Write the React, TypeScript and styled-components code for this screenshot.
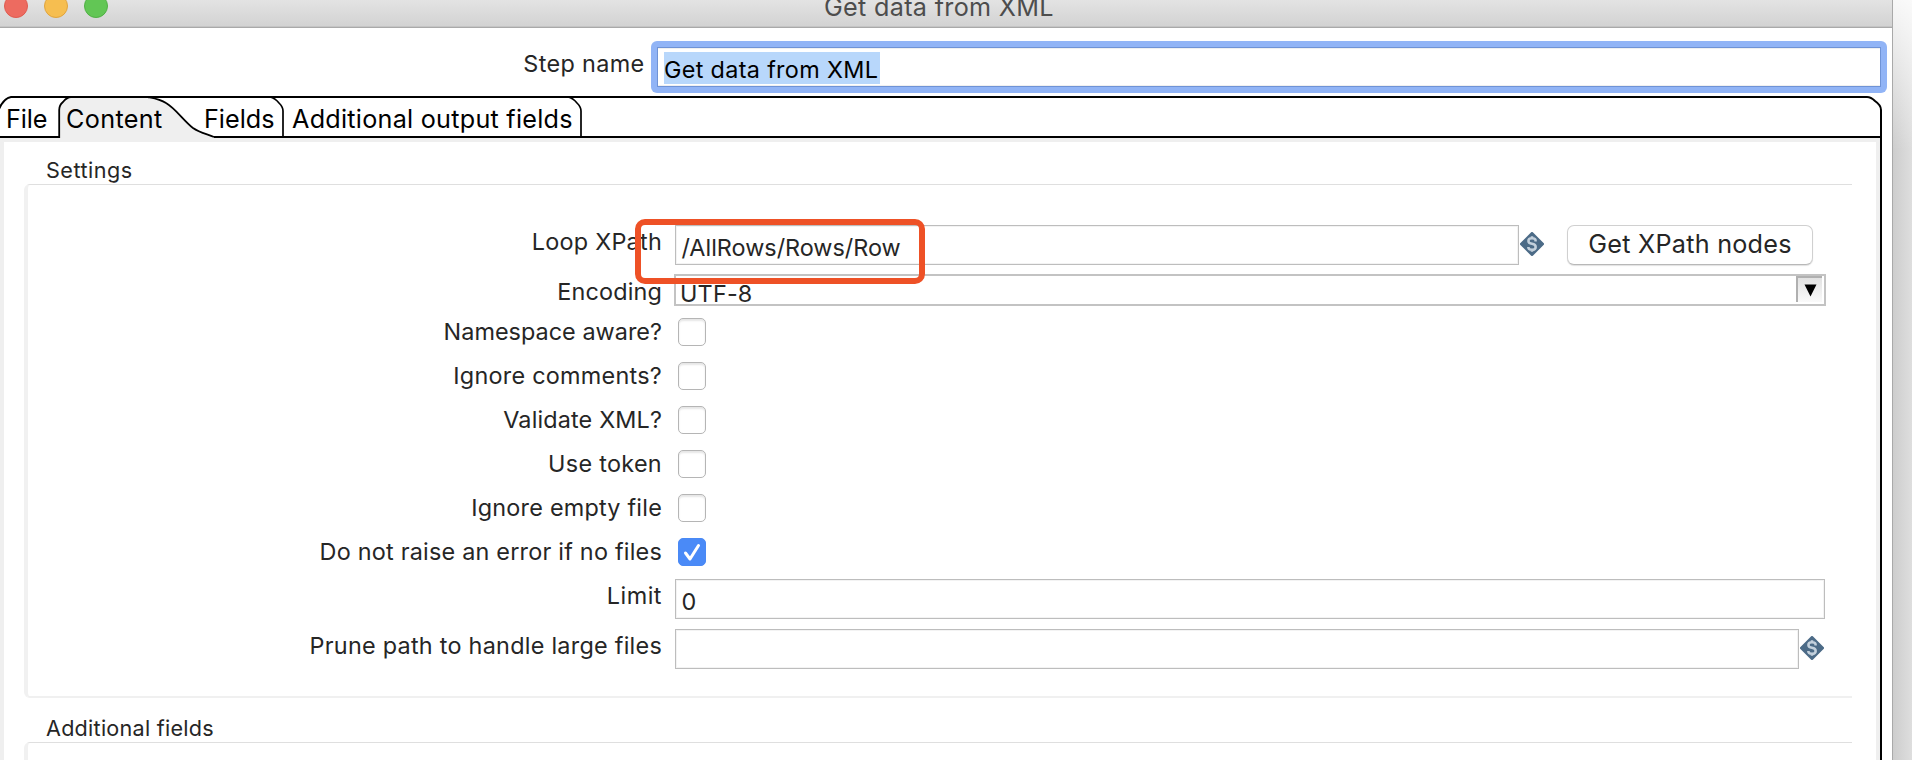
import React from 'react';
import styled, { createGlobalStyle } from 'styled-components';

const GlobalStyle = createGlobalStyle`
  * { box-sizing: border-box; }
  body {
    margin: 0;
    background: #fff;
    color: #262626;
    font-family: Inter, "Liberation Sans", sans-serif;
    font-size: 23.4px;
  }
`;

const Desktop = styled.div`
  display: flex;
  width: 1912px;
  height: 760px;
  overflow: hidden;
`;

const Dialog = styled.main`
  display: flex;
  flex-direction: column;
  width: 1892px;
  height: 760px;
  overflow: hidden;
  background: #fff;
`;

const DesktopShade = styled.div`
  flex: 1;
  border-left: 1px solid #a9a9a9;
  background:
    linear-gradient(to bottom, rgba(255, 255, 255, 0.85) 0, rgba(255, 255, 255, 0) 150px),
    linear-gradient(to right, #cdcdcd, #dedede);
`;

const TitleBar = styled.header`
  position: relative;
  flex: none;
  height: 28px;
  border-bottom: 1px solid #a9a9a9;
  box-shadow: inset 0 -1px 0 #c4c4c4;
  background: linear-gradient(to bottom, #e3e3e3, #d2d2d2);
  overflow: hidden;
`;

const TrafficLights = styled.div`
  display: flex;
  gap: 16px;
  margin: -6px 0 0 4px;
`;

const Light = styled.span<{ $fill: string; $rim: string }>`
  width: 24px;
  height: 24px;
  border: 1px solid ${p => p.$rim};
  border-radius: 50%;
  background: ${p => p.$fill};
`;

const WindowTitle = styled.div`
  position: absolute;
  left: 824px;
  top: -8px;
  font-size: 25.2px;
  line-height: 30px;
  letter-spacing: 0.3px;
  white-space: nowrap;
  color: #4d4d4d;
`;

const StepRow = styled.div`
  display: grid;
  grid-template-columns: 644.5px 1236px;
  column-gap: 6.5px;
  flex: none;
  height: 68px;
  padding-top: 13px;
`;

const Caption = styled.label<{ $down?: number; $spacing?: number }>`
  justify-self: end;
  margin-top: ${p => p.$down ?? 0}px;
  height: 28px;
  line-height: 28px;
  letter-spacing: ${p => p.$spacing ?? 0.27}px;
  white-space: nowrap;
`;

const FocusedField = styled.div`
  display: flex;
  height: 52px;
  padding: 6px;
  border-radius: 6px;
  background: #91b4f6;
`;

const FocusedInner = styled.div`
  flex: 1;
  padding: 4px 0 0 6px;
  border: 1px solid #6f93d6;
  background: #fff;
  box-shadow: inset 0 1px 0 #f0f0f0, inset 0 -1px 0 #f0f0f0;
  color: #000;
`;

const Selection = styled.span`
  display: block;
  width: 216px;
  height: 32px;
  line-height: 35px;
  letter-spacing: 0.32px;
  white-space: nowrap;
  background: #b8d7fb;
`;

const TabStrip = styled.nav`
  position: relative;
  display: flex;
  flex: none;
  height: 42px;
`;

const TabOutline = styled.svg`
  position: absolute;
  inset: 0;
`;

const Tab = styled.span<{ $width: number; $pad: number; $spacing: number }>`
  position: relative;
  flex: none;
  width: ${p => p.$width}px;
  padding-left: ${p => p.$pad}px;
  font-size: 25.2px;
  line-height: 46px;
  letter-spacing: ${p => p.$spacing}px;
  white-space: nowrap;
  color: #000;
`;

const TabPanel = styled.section`
  flex: 1;
  padding: 15px 23px 0 20px;
  border-style: solid;
  border-color: #efefef;
  border-width: 4px 4px 0;
  background: #fff;
`;

const PanelFrame = styled.div`
  display: flex;
  flex: 1;
  width: 1882px;
  border-right: 2px solid #000;
`;

const GroupTitle = styled.h2<{ $spacing: number }>`
  margin: 0 0 0 22px;
  height: 27px;
  font-size: 21.6px;
  font-weight: 400;
  line-height: 26px;
  letter-spacing: ${p => p.$spacing}px;
`;

const GroupBox = styled.div<{ $height: number }>`
  display: flex;
  flex-direction: column;
  width: 1828px;
  height: ${p => p.$height}px;
  margin-bottom: 17px;
  padding-top: 40px;
  border-top: 1px solid #dfdfdf;
  border-left: 4px solid #f1f1f1;
  border-bottom: 2px solid #f0f0f0;
  border-radius: 6px 0 0 6px;
`;

const FormRow = styled.div<{ $height: number; $gap?: number; $indent?: number }>`
  display: grid;
  grid-template-columns: 634px 1fr;
  column-gap: ${p => p.$indent ?? 13}px;
  height: ${p => p.$height}px;
  margin-bottom: ${p => p.$gap ?? 0}px;
`;

const Controls = styled.div`
  display: flex;
`;

const TextField = styled.div<{ $width: number; $spacing?: number }>`
  width: ${p => p.$width}px;
  height: 40px;
  padding-left: 5.5px;
  border: 1px solid #bdbdbd;
  box-shadow: inset 0 0 0 1px #f3f3f3;
  line-height: 44px;
  letter-spacing: ${p => p.$spacing ?? 0}px;
`;

const VariableMark = styled.svg`
  flex: none;
  margin: 7px 0 0 1px;
`;

const PushButton = styled.button`
  width: 246px;
  height: 40px;
  margin-left: 23px;
  padding: 0 0 2px;
  border: 1px solid #d0d0d0;
  border-bottom-color: #b8b8b8;
  border-radius: 7px;
  background: #fff;
  box-shadow: 0 1px 1px rgba(0, 0, 0, 0.12);
  color: #262626;
  font: 25.2px Inter, "Liberation Sans", sans-serif;
  letter-spacing: 0.25px;
`;

const Combo = styled.div`
  display: flex;
  justify-content: space-between;
  width: 1152px;
  height: 32px;
  padding: 0 2px 2px 4px;
  border: 2px solid #c3c3c3;
  line-height: 36px;
  letter-spacing: 0.2px;
`;

const DropButton = styled.span`
  display: flex;
  justify-content: center;
  width: 26px;
  height: 26px;
  padding-top: 6px;
  border-top: 2px solid #b0b0b0;
  border-left: 2px solid #b0b0b0;
  background: linear-gradient(to bottom, #e2e2e2, #fafafa);
`;

const Check = styled.span<{ $on?: boolean }>`
  width: 28px;
  height: 28px;
  border: 1px solid ${p => (p.$on ? '#4a89f5' : '#b5b5b5')};
  border-radius: 5px;
  background: ${p => (p.$on ? '#4a8af7' : '#fff')};
  box-shadow: ${p => (p.$on ? 'none' : 'inset 0 2px 2px rgba(0, 0, 0, 0.1)')};
`;

const Highlight = styled.div`
  position: absolute;
  left: 635px;
  top: 219px;
  width: 290px;
  height: 65px;
  border: 6px solid #ee5126;
  border-radius: 10px;
`;

function VariableIcon() {
  return (
    <VariableMark width="24" height="24" viewBox="0 0 24 24">
      <path d="M12 1.5 L22.5 12 L12 22.5 L1.5 12 Z" fill="#4c6b87" stroke="#4c6b87" strokeWidth="3" strokeLinejoin="round" />
      <path
        d="M15.6 9.4 V8.6 Q15.6 6.2 12 6.2 Q8.4 6.2 8.4 8.9 Q8.4 11.2 12 11.8 Q15.7 12.5 15.7 14.9 Q15.7 17.8 12 17.8 Q8.3 17.8 8.3 15 M12 4.2 V6.4 M12 17.4 V19.8"
        fill="none"
        stroke="#c3d0dc"
        strokeWidth="2.5"
      />
    </VariableMark>
  );
}

const toggles = [
  { label: 'Namespace aware?', spacing: 0.03 },
  { label: 'Ignore comments?', spacing: 0.25 },
  { label: 'Validate XML?', spacing: 0.15 },
  { label: 'Use token', spacing: 0.3 },
  { label: 'Ignore empty file', spacing: 0.22 },
  { label: 'Do not raise an error if no files', spacing: 0.22, on: true },
];

export default function App() {
  return (
    <Desktop>
      <GlobalStyle />
      <Dialog>
        <TitleBar>
          <TrafficLights>
            <Light $fill="#ed6b60" $rim="#df5b50" />
            <Light $fill="#f6be50" $rim="#e0a43e" />
            <Light $fill="#62c655" $rim="#50b045" />
          </TrafficLights>
          <WindowTitle>Get data from XML</WindowTitle>
        </TitleBar>

        <StepRow>
          <Caption $down={8.5} $spacing={0.35}>Step name</Caption>
          <FocusedField>
            <FocusedInner>
              <Selection>Get data from XML</Selection>
            </FocusedInner>
          </FocusedField>
        </StepRow>

        <TabStrip>
          <TabOutline width="1892" height="46" viewBox="0 0 1892 46">
            <path d="M60 46 V13 Q60 9 64 6 Q67 1 72 1 H148 C170 1 178 18 189 28 C198 37 204 39 214 41 V46 Z" fill="#efefef" />
            <g fill="none" stroke="#000" strokeWidth="2">
              <path d="M-1 13 Q4 2 11 1 H1867 Q1871 1 1875 5 Q1881 9 1881 14 V46" />
              <path d="M0 41 H59.2 V14 Q59.2 9 63 6 Q67 1 71 1" strokeWidth="1.8" />
              <path d="M148 1 C153 2 160 3 166 7 C175 12 184 25 193 32 C200 37 207 38 214 41" strokeWidth="1.8" />
              <path d="M0 41 H60 M214 41 H1881" />
              <path d="M270 1 Q275 2 279 7 Q283 11 283 15 V41" strokeWidth="1.7" />
              <path d="M568 1 Q573 2 577 7 Q581 11 581 15 V41" strokeWidth="1.7" />
            </g>
          </TabOutline>
          <Tab $width={60} $pad={6} $spacing={-0.1}>File</Tab>
          <Tab $width={143} $pad={6} $spacing={0.35}>Content</Tab>
          <Tab $width={80} $pad={1} $spacing={0}>Fields</Tab>
          <Tab $width={298} $pad={9} $spacing={0.25}>Additional output fields</Tab>
        </TabStrip>

        <PanelFrame>
          <TabPanel>
            <GroupTitle $spacing={0.5}>Settings</GroupTitle>
            <GroupBox $height={514}>
              <FormRow $height={40} $gap={9}>
                <Caption $down={2.5} $spacing={0.25}>Loop XPath</Caption>
                <Controls>
                  <TextField $width={844}>/AllRows/Rows/Row</TextField>
                  <VariableIcon />
                  <PushButton>Get XPath nodes</PushButton>
                </Controls>
              </FormRow>
              <FormRow $height={32} $gap={12} $indent={12}>
                <Caption $down={3.5} $spacing={0.18}>Encoding</Caption>
                <Combo>
                  UTF-8
                  <DropButton>
                    <svg width="13" height="13" viewBox="0 0 13 13">
                      <path d="M0.5 0.5 H12.5 L6.5 12.5 Z" fill="#000" />
                    </svg>
                  </DropButton>
                </Combo>
              </FormRow>
              {toggles.map((t, i) => (
                <FormRow key={t.label} $height={28} $gap={i === toggles.length - 1 ? 13 : 16} $indent={16}>
                  <Caption $down={-0.5} $spacing={t.spacing}>{t.label}</Caption>
                  <Check $on={t.on}>
                    {t.on && (
                      <svg width="26" height="26" viewBox="0 0 26 26">
                        <path d="M6.5 14 L11 20 L19.5 6.5" fill="none" stroke="#fff" strokeWidth="3" strokeLinecap="round" strokeLinejoin="round" />
                      </svg>
                    )}
                  </Check>
                </FormRow>
              ))}
              <FormRow $height={40} $gap={10}>
                <Caption $down={2.5} $spacing={0.5}>Limit</Caption>
                <TextField $width={1150}>0</TextField>
              </FormRow>
              <FormRow $height={40}>
                <Caption $down={3} $spacing={0.26}>Prune path to handle large files</Caption>
                <Controls>
                  <TextField $width={1124} />
                  <VariableIcon />
                </Controls>
              </FormRow>
            </GroupBox>
            <GroupTitle $spacing={0.25}>Additional fields</GroupTitle>
            <GroupBox $height={100} />
          </TabPanel>
        </PanelFrame>
      </Dialog>
      <DesktopShade />
      <Highlight />
    </Desktop>
  );
}
